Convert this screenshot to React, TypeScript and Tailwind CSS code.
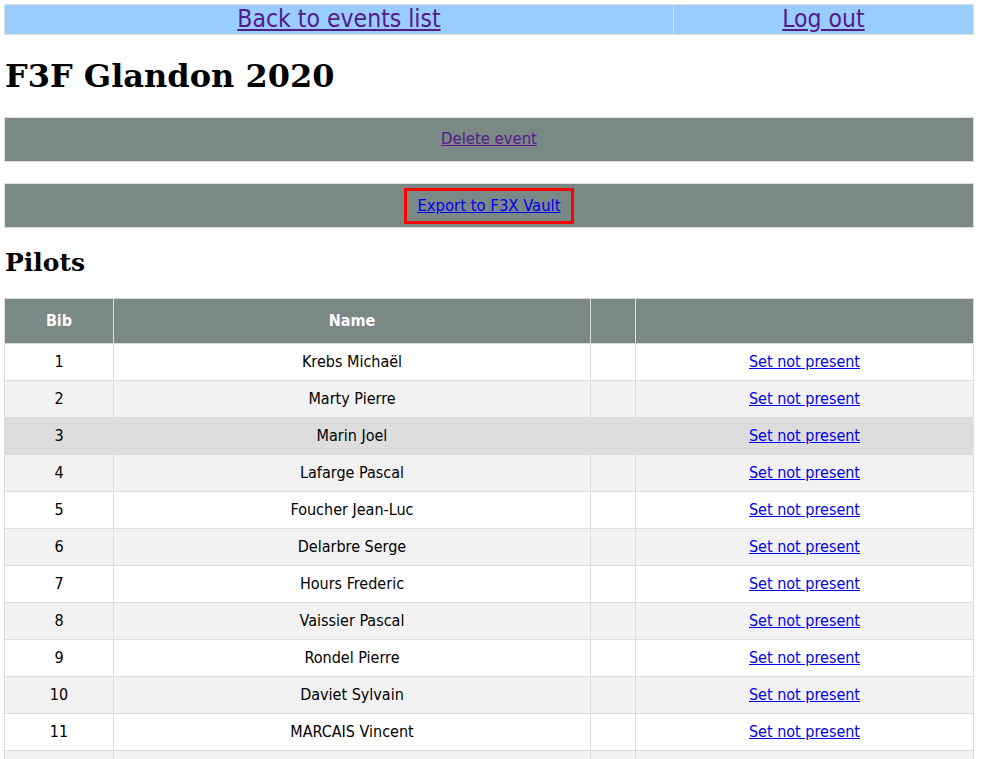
const pilots = [
  "Krebs Michaël",
  "Marty Pierre",
  "Marin Joel",
  "Lafarge Pascal",
  "Foucher Jean-Luc",
  "Delarbre Serge",
  "Hours Frederic",
  "Vaissier Pascal",
  "Rondel Pierre",
  "Daviet Sylvain",
  "MARCAIS Vincent",
];

const sans = "font-['DejaVu_Sans_Condensed','DejaVu_Sans',sans-serif]";

export default function App() {
  return (
    <div className={`min-h-screen bg-white px-[4px] pt-[4px] text-black ${sans}`}>
      <table className="w-[970px] table-fixed border-collapse">
        <colgroup>
          <col className="w-[669px]" />
          <col />
        </colgroup>
        <tbody>
          <tr className="h-[30px] bg-[#99ccff] text-[24.5px] leading-none">
            <td className="border border-[#dddddd] text-center">
              <a href="#" className="text-[#551a8b] underline">Back to events list</a>
            </td>
            <td className="border border-[#dddddd] text-center">
              <a href="#" className="text-[#551a8b] underline">Log out</a>
            </td>
          </tr>
        </tbody>
      </table>

      <h1 className="mt-[22px] mb-[22px] pl-[1px] font-['DejaVu_Serif',serif] text-[32px] font-bold leading-[38px]">
        F3F Glandon 2020
      </h1>

      <div className="flex h-[45px] w-[970px] items-center justify-center border border-[#dddddd] bg-[#7a8886] text-[16.5px]">
        <a href="#" className="text-[#551a8b] underline">Delete event</a>
      </div>

      <div className="mt-[21px] flex h-[45px] w-[970px] items-center justify-center border border-[#dddddd] bg-[#7a8886] text-[16.5px]">
        <a href="#" className="border-[3px] border-[#ff0000] px-[10px] py-[5px] leading-[20px] text-[#0000ee] underline">
          Export to F3X Vault
        </a>
      </div>

      <h2 className="mt-[20px] mb-[20px] pl-[1px] font-['DejaVu_Serif',serif] text-[25px] font-bold leading-[30px]">
        Pilots
      </h2>

      <table className="w-[970px] table-fixed border-collapse text-[16px]">
        <colgroup>
          <col className="w-[109px]" />
          <col className="w-[477px]" />
          <col className="w-[45px]" />
          <col />
        </colgroup>
        <thead>
          <tr className="h-[45px] bg-[#7a8886] font-bold text-white">
            <th className="border border-[#dddddd]">Bib</th>
            <th className="border border-[#dddddd]">Name</th>
            <th className="border border-[#dddddd]"></th>
            <th className="border border-[#dddddd]"></th>
          </tr>
        </thead>
        <tbody>
          {pilots.map((name, i) => (
            <tr
              key={name}
              className={`h-[37px] ${i === 2 ? "bg-[#dddddd]" : i % 2 === 1 ? "bg-[#f2f2f2]" : "bg-white"}`}
            >
              <td className="border border-[#dddddd] text-center">{i + 1}</td>
              <td className="border border-[#dddddd] text-center">{name}</td>
              <td className="border border-[#dddddd]"></td>
              <td className="border border-[#dddddd] text-center">
                <a href="#" className="text-[#0000ee] underline">Set not present</a>
              </td>
            </tr>
          ))}
          <tr className="h-[37px] bg-[#f2f2f2]">
            <td className="border border-[#dddddd]"></td>
            <td className="border border-[#dddddd]"></td>
            <td className="border border-[#dddddd]"></td>
            <td className="border border-[#dddddd]"></td>
          </tr>
        </tbody>
      </table>
    </div>
  );
}
